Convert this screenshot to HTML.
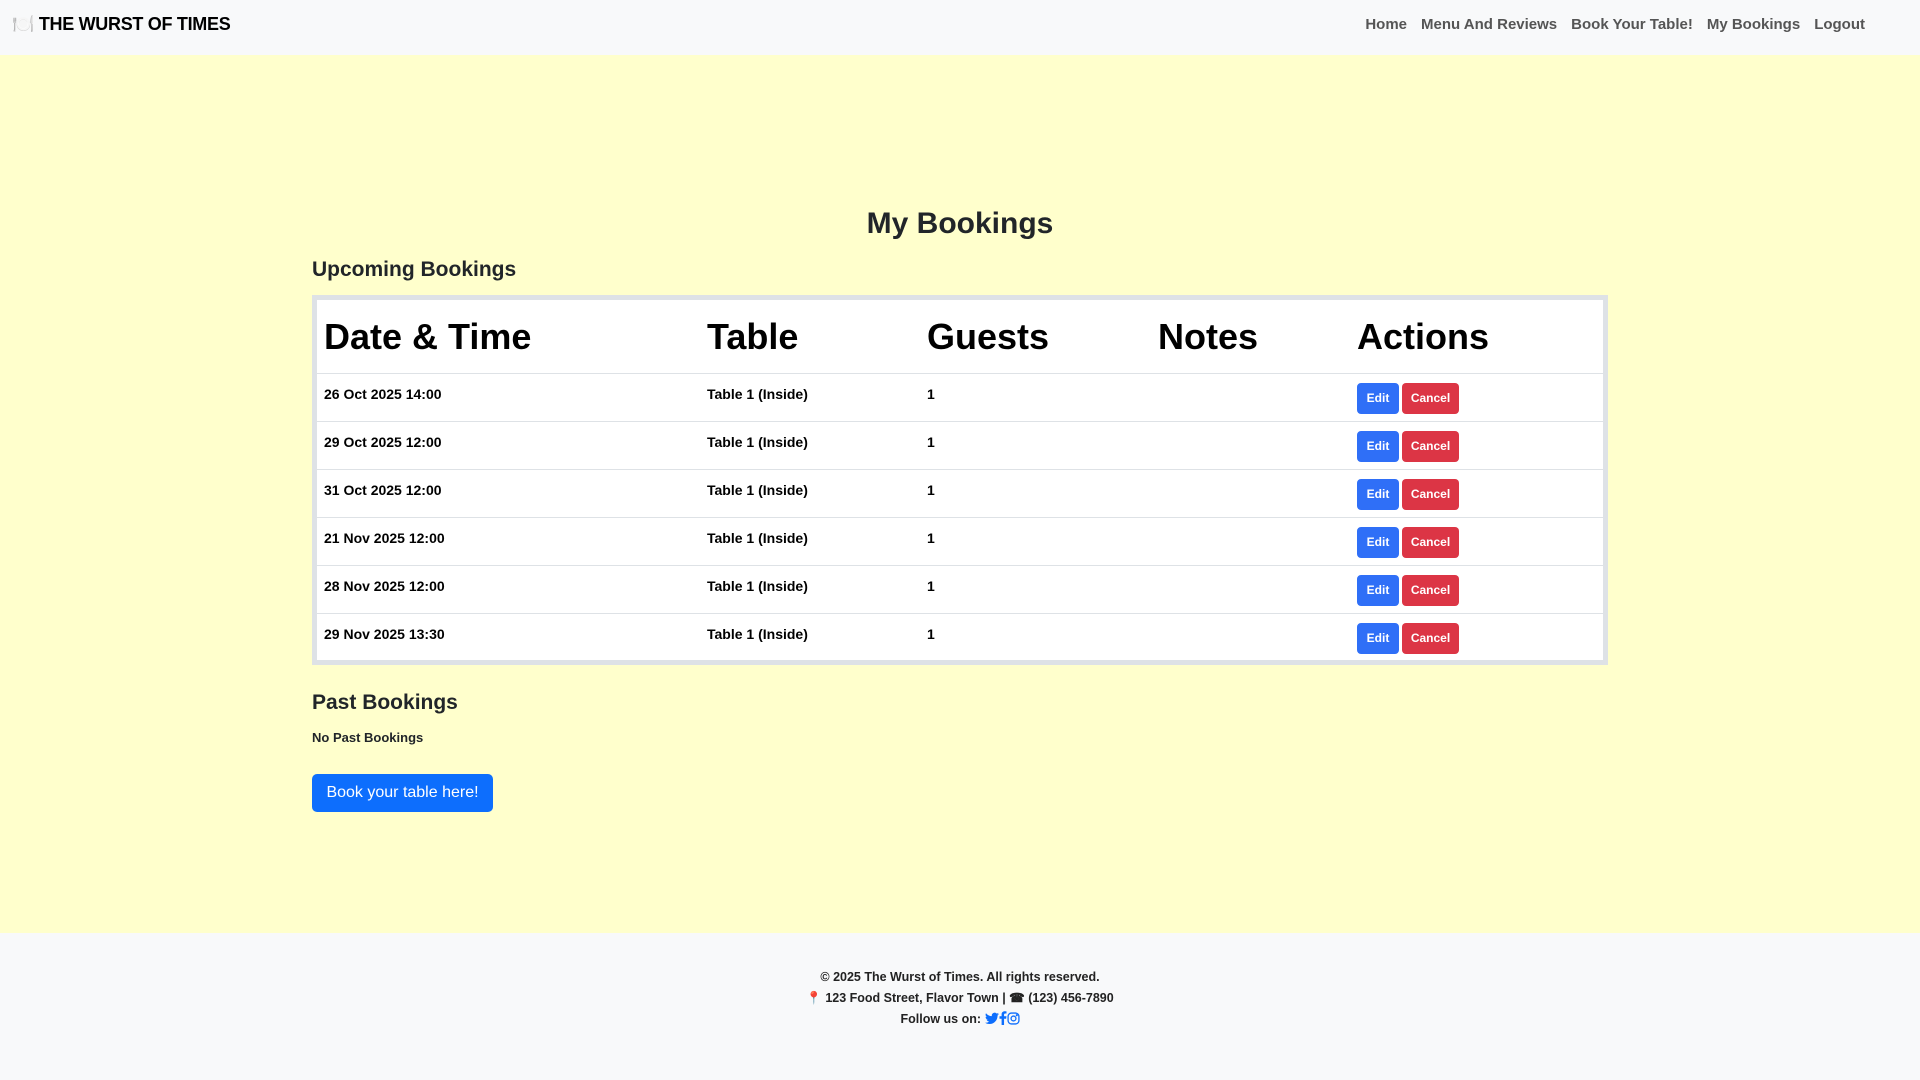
<!DOCTYPE html>
<html><head><meta charset="utf-8"><style>
*{box-sizing:border-box;margin:0;padding:0}
body{width:1920px;height:1080px;position:relative;background:#ffffcc;font-family:"Liberation Sans",sans-serif;font-weight:bold;color:#212529;overflow:hidden}
.nav{position:absolute;left:0;top:0;width:1920px;height:55px;background:#f8f9fa}
.logo{position:absolute;left:12px;top:14px;font-size:18px;color:#000;letter-spacing:-0.3px}
.links{position:absolute;right:55px;top:16px;font-size:15px;color:#555;word-spacing:0}
.links span{margin-left:14px}
.a{position:absolute}
h1{position:absolute;left:0;width:1920px;text-align:center;top:207px;font-size:30px}
.tbl{position:absolute;left:312px;top:295px;width:1296px;height:370px;border:5px solid #dee2e6;background:#fff}
.row{position:absolute;left:0;width:1286px;border-bottom:1px solid #dee2e6}
.h{font-size:36px;color:#000;position:absolute;top:16px}
.c{font-size:14px;color:#000;position:absolute;top:12px}
.b{position:absolute;top:9px;height:31px;border-radius:4px;color:#fff;font-size:12px;text-align:center;line-height:31px}
.e{left:1040px;width:42px;background:#2f6ff7}
.x{left:1085px;width:57px;background:#dc3545}
.foot{position:absolute;left:0;top:933px;width:1920px;height:147px;background:#f8f9fa;text-align:center;font-size:12.5px;color:#222;line-height:21px;padding-top:34px}
.foot svg{vertical-align:-2px}
</style></head><body>
<div class="nav"><div class="logo">🍽️ THE WURST OF TIMES</div>
<div class="links"><span>Home</span><span>Menu And Reviews</span><span>Book Your Table!</span><span>My Bookings</span><span>Logout</span></div></div>
<h1>My Bookings</h1>
<div class="a" style="left:312px;top:258px;font-size:21px">Upcoming Bookings</div>
<div class="tbl">
<div class="row" style="top:0;height:74px">
<div class="h" style="left:7px">Date &amp; Time</div><div class="h" style="left:390px">Table</div><div class="h" style="left:610px">Guests</div><div class="h" style="left:841px">Notes</div><div class="h" style="left:1040px">Actions</div></div>
<div class="row" style="top:74px;height:48px"><div class="c" style="left:7px">26 Oct 2025 14:00</div><div class="c" style="left:390px">Table 1 (Inside)</div><div class="c" style="left:610px">1</div><div class="b e">Edit</div><div class="b x">Cancel</div></div>
<div class="row" style="top:122px;height:48px"><div class="c" style="left:7px">29 Oct 2025 12:00</div><div class="c" style="left:390px">Table 1 (Inside)</div><div class="c" style="left:610px">1</div><div class="b e">Edit</div><div class="b x">Cancel</div></div>
<div class="row" style="top:170px;height:48px"><div class="c" style="left:7px">31 Oct 2025 12:00</div><div class="c" style="left:390px">Table 1 (Inside)</div><div class="c" style="left:610px">1</div><div class="b e">Edit</div><div class="b x">Cancel</div></div>
<div class="row" style="top:218px;height:48px"><div class="c" style="left:7px">21 Nov 2025 12:00</div><div class="c" style="left:390px">Table 1 (Inside)</div><div class="c" style="left:610px">1</div><div class="b e">Edit</div><div class="b x">Cancel</div></div>
<div class="row" style="top:266px;height:48px"><div class="c" style="left:7px">28 Nov 2025 12:00</div><div class="c" style="left:390px">Table 1 (Inside)</div><div class="c" style="left:610px">1</div><div class="b e">Edit</div><div class="b x">Cancel</div></div>
<div class="row" style="top:314px;height:46px;border-bottom:none"><div class="c" style="left:7px">29 Nov 2025 13:30</div><div class="c" style="left:390px">Table 1 (Inside)</div><div class="c" style="left:610px">1</div><div class="b e">Edit</div><div class="b x">Cancel</div></div>
</div>
<div class="a" style="left:312px;top:691px;font-size:21px">Past Bookings</div>
<div class="a" style="left:312px;top:730px;font-size:13px">No Past Bookings</div>
<div class="a" style="left:312px;top:774px;width:181px;height:38px;background:#0d6efd;color:#fff;border-radius:5px;font-weight:normal;font-size:16px;line-height:38px;text-align:center">Book your table here!</div>
<div class="foot">© 2025 The Wurst of Times. All rights reserved.<br>📍 123 Food Street, Flavor Town | ☎ (123) 456-7890<br>Follow us on: <svg width="14" height="13" viewBox="0 0 24 20"><path fill="#0d6efd" d="M24 2.4a10 10 0 0 1-2.8.8A5 5 0 0 0 23.3.4a10 10 0 0 1-3.1 1.2A4.9 4.9 0 0 0 11.8 6 14 14 0 0 1 1.7.9a4.9 4.9 0 0 0 1.5 6.6A4.9 4.9 0 0 1 1 6.9a4.9 4.9 0 0 0 3.9 4.8 5 5 0 0 1-2.2.1 4.9 4.9 0 0 0 4.6 3.4A9.9 9.9 0 0 1 0 17.3 14 14 0 0 0 7.5 19.5c9 0 14-7.5 14-14v-.6A10 10 0 0 0 24 2.4z"/></svg><svg width="8" height="14" viewBox="0 0 10 20"><path fill="#0d6efd" d="M6.5 20v-9h3l.5-3.5H6.5V5.3c0-1 .3-1.7 1.8-1.7H10V.5A24 24 0 0 0 7.4.4C4.9.4 3 2 3 4.9v2.6H0V11h3v9z"/></svg><svg width="13" height="13" viewBox="0 0 24 24" fill="none" stroke="#0d6efd" stroke-width="2.4"><rect x="2" y="2" width="20" height="20" rx="6"/><circle cx="12" cy="12" r="4.5"/><circle cx="18" cy="6" r="0.8" fill="#0d6efd"/></svg></div>
</body></html>
